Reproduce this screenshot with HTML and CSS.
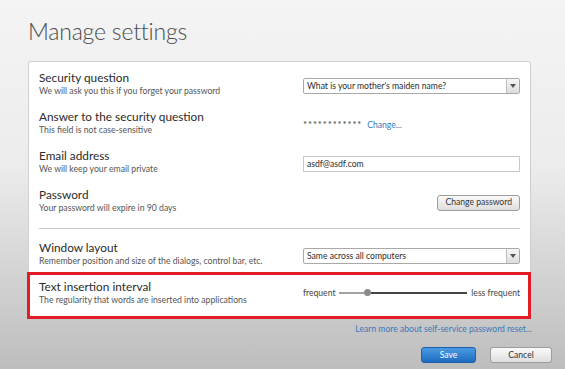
FILE: index.html
```html
<!DOCTYPE html>
<html lang="en">

<head>
	<meta charset="UTF-8">
	<title>Manage settings</title>
	<link rel="stylesheet" href="styles.css">
</head>

<body>

	<div class="dialog">

		<h1 class="title">Manage settings</h1>

		<div class="panel">

			<div class="row">
				<div class="label">
					<div class="name">Security question</div>
					<div class="hint">We will ask you this if you forget your password</div>
				</div>
				<div class="control">
					<div class="select">
						<span class="select-text">What is your mother's maiden name?</span>
						<span class="select-arrow"></span>
					</div>
				</div>
			</div>

			<div class="row">
				<div class="label">
					<div class="name">Answer to the security question</div>
					<div class="hint">This field is not case-sensitive</div>
				</div>
				<div class="control">
					<span class="stars">************</span>
					<a class="link" href="#">Change...</a>
				</div>
			</div>

			<div class="row">
				<div class="label">
					<div class="name">Email address</div>
					<div class="hint">We will keep your email private</div>
				</div>
				<div class="control">
					<div class="input">asdf@asdf.com</div>
				</div>
			</div>

			<div class="row">
				<div class="label">
					<div class="name">Password</div>
					<div class="hint">Your password will expire in 90 days</div>
				</div>
				<div class="control control-right">
					<button class="btn btn-change">Change password</button>
				</div>
			</div>

			<div class="separator"></div>

			<div class="row">
				<div class="label">
					<div class="name">Window layout</div>
					<div class="hint">Remember position and size of the dialogs, control bar, etc.</div>
				</div>
				<div class="control">
					<div class="select">
						<span class="select-text">Same across all computers</span>
						<span class="select-arrow"></span>
					</div>
				</div>
			</div>

			<div class="row row-marked">
				<div class="label">
					<div class="name">Text insertion interval</div>
					<div class="hint">The regularity that words are inserted into applications</div>
				</div>
				<div class="control slider">
					<span class="slider-label">frequent</span>
					<div class="track">
						<div class="track-done"></div>
						<div class="thumb"></div>
						<div class="track-rest"></div>
					</div>
					<span class="slider-label">less frequent</span>
				</div>
			</div>

		</div> <!-- end panel -->

		<div class="more">
			<a class="link" href="#">Learn more about self-service password reset...</a>
		</div>

		<div class="actions">
			<button class="btn btn-primary">Save</button>
			<button class="btn btn-cancel">Cancel</button>
		</div>

	</div> <!-- end dialog -->

</body>

</html>
```

FILE: styles.css
```css
html,
body {
	height: 100%;
}

body {
	background: linear-gradient(#f4f4f4 0%, #ececec 45%, #bdbdbd 100%);
	color: #2b2b2b;
	font-family: 'Lato', 'Open Sans', sans-serif;
	margin: 0;
}

.dialog {
	padding: 0 35px 0 28px;
}

.title {
	color: #4b4b4b;
	font-size: 23px;
	font-weight: 300;
	letter-spacing: -0.2px;
	line-height: 30px;
	margin: 0;
	padding: 16px 0 15px;
}

.panel {
	background: #fff;
	border: 1px solid #cfcfcf;
	border-radius: 2px;
	padding: 8px 10px 0 10px;
	width: 481px;
}

.row {
	align-content: start;
	align-items: center;
	display: grid;
	grid-template-columns: 264px 217px;
	height: 39px;
}

.label {
	align-self: start;
}

.name {
	font-size: 11.8px;
	line-height: 15px;
}

.hint {
	color: #555;
	font-size: 8.7px;
	line-height: 12px;
}

.control {
	align-items: center;
	display: flex;
	font-size: 8.6px;
	height: 27px;
	padding-top: 2px;
}

.control-right {
	justify-content: flex-end;
}

.select {
	align-items: center;
	border: 1px solid #a9a9a9;
	border-radius: 2px;
	box-sizing: border-box;
	display: flex;
	height: 16px;
	width: 100%;
}

.select-text {
	flex: 1;
	padding-left: 3px;
}

.select-arrow {
	background: linear-gradient(#f6f6f6, #dcdcdc);
	border-left: 1px solid #bdbdbd;
	height: 100%;
	position: relative;
	width: 12px;
}

.select-arrow:after {
	border-left: 3px solid transparent;
	border-right: 3px solid transparent;
	border-top: 4px solid #555;
	content: "";
	left: 3px;
	position: absolute;
	top: 5px;
}

.stars {
	color: #444;
	font-size: 9.5px;
	letter-spacing: 0.9px;
	margin-right: 5px;
}

.link {
	color: #3b78b8;
	text-decoration: none;
}

.input {
	border: 1px solid #c8c8c8;
	box-sizing: border-box;
	height: 16px;
	line-height: 14px;
	padding-left: 3px;
	width: 100%;
}

.btn {
	background: linear-gradient(#fafafa, #dedede);
	border: 1px solid #9c9c9c;
	border-radius: 3px;
	color: #333;
	font-family: 'Lato', 'Open Sans', sans-serif;
	font-size: 8.6px;
	height: 16px;
	line-height: 13px;
	padding: 0 5px;
}

.btn-change {
	padding: 0 7px;
}

.separator {
	border-top: 1px solid #c9c9c9;
	margin: 2px 0 11px 0;
}

.row-marked {
	border: 3px solid #e21c25;
	height: 37px;
	margin: -7px -11px -1px -12px;
	padding: 4px 8px 0 9px;
}

.slider {
	padding-top: 0;
}

.slider-label {
	color: #444;
}

.track {
	align-items: center;
	display: flex;
	flex: 1;
	margin: 0 4px;
}

.track-done {
	background: #a3a3a3;
	height: 2px;
	width: 25px;
}

.thumb {
	background: #8a8a8a;
	border-radius: 50%;
	height: 7px;
	width: 7px;
}

.track-rest {
	background: #444;
	flex: 1;
	height: 2px;
}

.more {
	font-size: 8.6px;
	padding: 5px 0 0;
	text-align: right;
	width: 504px;
}

.actions {
	display: flex;
	gap: 14px;
	justify-content: flex-end;
	margin-right: -22px;
	padding-top: 13px;
}

.btn-primary {
	background: linear-gradient(#4a9be3, #1e6cc0);
	border-color: #1d5fa8;
	color: #fff;
	width: 55px;
}

.btn-cancel {
	width: 62px;
}
```
